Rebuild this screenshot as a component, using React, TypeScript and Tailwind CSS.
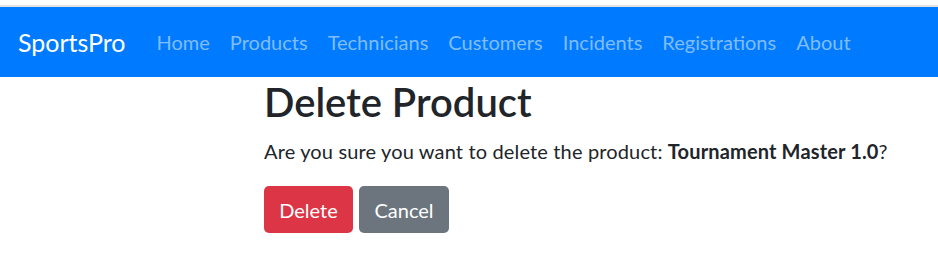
import React from "react";

const links = ["Home", "Products", "Technicians", "Customers", "Incidents", "Registrations", "About"];

export default function App() {
  return (
    <div className="w-[938px] h-[267px] bg-white overflow-hidden" style={{ fontFamily: "Lato, 'Noto Sans', sans-serif" }}>
      <div className="h-[5px] bg-white" />
      <div className="h-[2px] bg-[#e2e2e2]" />
      <nav className="h-[70px] bg-[#007bff] flex items-center px-[18px]">
        <span className="text-[25px] text-white mr-[21px] leading-[30px]">SportsPro</span>
        <div className="flex items-center">
          {links.map((l) => (
            <span key={l} className="px-[10px] text-[20px] leading-[30px] text-[#80bdff]">
              {l}
            </span>
          ))}
        </div>
      </nav>
      <div className="pl-[264px] text-[#212529]">
        <h1 className="mt-[1px] text-[40px] leading-[48px] font-semibold mb-[10px]">Delete Product</h1>
        <p className="text-[20px] leading-[30px] mb-[20px] tracking-[0.15px]">
          Are you sure you want to delete the product: <strong className="font-bold">Tournament Master 1.0</strong>?
        </p>
        <div className="flex gap-[6px]">
          <button className="w-[89px] h-[47px] rounded-[5px] bg-[#dc3545] text-white text-[20px] leading-[30px] flex items-center justify-center">
            Delete
          </button>
          <button className="w-[90px] h-[47px] rounded-[5px] bg-[#6c757d] text-white text-[20px] leading-[30px] flex items-center justify-center">
            Cancel
          </button>
        </div>
      </div>
    </div>
  );
}
